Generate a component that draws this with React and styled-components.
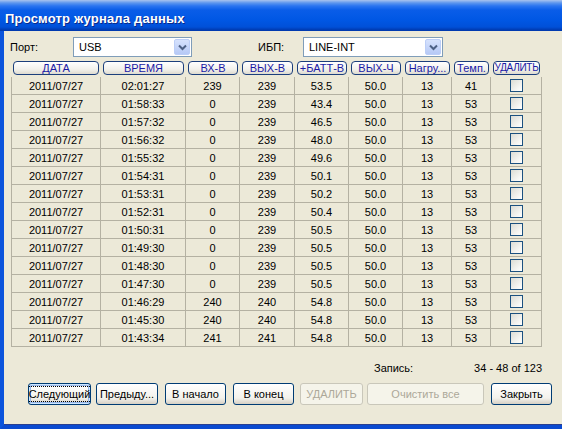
import React from 'react';
import styled, { createGlobalStyle } from 'styled-components';

const GlobalStyle = createGlobalStyle`
  body {
    margin: 0;
    font-family: "Liberation Sans", Arial, sans-serif;
  }
  #root {
    width: 562px;
    height: 429px;
    overflow: hidden;
  }
`

//whole dialog
const Window = styled.div`
  width: 562px;
  height: 429px;
  display: flex;
  flex-direction: column;
  overflow: hidden;
`

//blue xp caption
const TitleBar = styled.div`
  height: 31px;
  flex: none;
  display: flex;
  align-items: center;
  padding-left: 5px;
  padding-top: 5px;
  box-sizing: border-box;
  background: linear-gradient(
    to bottom,
    #a9c3ee 0px,
    #5b95ee 3px,
    #2a74f0 6px,
    #0a5de8 10px,
    #0057e4 20px,
    #0050d8 27px,
    #003ab0 30px,
    #003ab0 31px
  );
`

const Title = styled.span`
  color: #fff;
  font-weight: bold;
  font-size: 13px;
  text-shadow: 1px 1px 0 #0a2a8a;
  letter-spacing: 0.2px;
`

//beige client area with xp frame on left and bottom
const Content = styled.div`
  flex: 1;
  background: #ece9d8;
  border-left: 4px solid #0b54dc;
  border-bottom: 4px solid #0a4ad0;
  box-shadow: inset 0 -1px 0 #2a3f8f;
  padding: 6px 0 0 7px;
  display: flex;
  flex-direction: column;
  font-size: 11px;
  color: #000;
`

const FilterRow = styled.div`
  display: flex;
  align-items: center;
  height: 20px;
`

const Label = styled.span`
  width: ${p => p.$w}px;
  margin-left: ${p => p.$ml || 0}px;
  font-size: 11px;
`

const Combo = styled.div`
  width: ${p => p.$w}px;
  height: 20px;
  box-sizing: border-box;
  border: 1px solid #7f9db9;
  background: #fff;
  display: flex;
  align-items: center;
  padding: 1px;
`

const ComboText = styled.span`
  flex: 1;
  padding-left: 4px;
  font-size: 11px;
`

const ComboButton = styled.div`
  width: 16px;
  height: 16px;
  box-sizing: border-box;
  border: 1px solid #bccef7;
  border-radius: 2px;
  background: linear-gradient(to bottom, #d6e2fd, #b6c9f6);
  display: flex;
  align-items: center;
  justify-content: center;
`

//table
const Grid = styled.div`
  margin-top: 3px;
  width: 531px;
  display: grid;
  grid-template-columns: 90px 85px 54px 55px 54px 54px 49px 39px 51px;
`

const HeadCell = styled.div`
  height: 17px;
  padding: 1px 2px 2px 2px;
  box-sizing: border-box;
`

const HeadButton = styled.div`
  height: 14px;
  box-sizing: border-box;
  border: 1px solid #1c3f7c;
  border-radius: 4px;
  background: linear-gradient(to bottom, #ffffff, #f2f1ec 60%, #dedbd0);
  color: #1a1aa6;
  font-size: ${p => (p.$tight ? 10 : 11)}px;
  letter-spacing: ${p => (p.$tight ? -0.3 : 0)}px;
  line-height: 12px;
  text-align: center;
  white-space: nowrap;
  overflow: hidden;
`

const Cell = styled.div`
  height: 18px;
  box-sizing: border-box;
  border-bottom: 1px solid #b4b1a2;
  border-right: 1px solid #b4b1a2;
  border-left: ${p => (p.$first ? '1px solid #b4b1a2' : 'none')};
  display: flex;
  align-items: center;
  justify-content: center;
  font-size: 11px;
  background: #ece9d8;
`

const Check = styled.div`
  width: 13px;
  height: 13px;
  box-sizing: border-box;
  border: 1px solid #1c5180;
  background: linear-gradient(135deg, #dcdcd4, #f6f6f3 70%, #ffffff);
`

//record counter
const StatRow = styled.div`
  width: 531px;
  margin-top: 15px;
  display: flex;
  justify-content: flex-end;
`

const Stat = styled.div`
  width: 168px;
  display: flex;
  justify-content: space-between;
  font-size: 11px;
`

const ButtonRow = styled.div`
  margin-top: 9px;
  display: flex;
`

const Button = styled.div`
  width: ${p => p.$w}px;
  margin-left: ${p => p.$ml}px;
  height: 22px;
  box-sizing: border-box;
  border: 1px solid ${p => (p.$disabled ? '#c9c7ba' : '#003c74')};
  border-radius: 3px;
  background: ${p =>
    p.$disabled
      ? '#f5f4ea'
      : 'linear-gradient(to bottom, #ffffff, #f3f2ec 70%, #d6d0c5)'};
  color: ${p => (p.$disabled ? '#aca899' : '#000')};
  box-shadow: ${p =>
    p.$focus ? 'inset 0 0 0 1px #cee7ff, inset 0 0 0 2px #98b8ea' : 'none'};
  font-size: 11px;
  display: flex;
  align-items: center;
  justify-content: center;
  white-space: nowrap;
  overflow: hidden;
`

const FocusText = styled.span`
  outline: 1px dotted #000;
  outline-offset: 1px;
`

const headers = ['ДАТА', 'ВРЕМЯ', 'ВХ-В', 'ВЫХ-В', '+БАТТ-В', 'ВЫХ-Ч', 'Нагру...', 'Темп.', 'УДАЛИТЬ'];

const rows = [
  ['02:01:27', '239', '239', '53.5', '41'],
  ['01:58:33', '0', '239', '43.4', '53'],
  ['01:57:32', '0', '239', '46.5', '53'],
  ['01:56:32', '0', '239', '48.0', '53'],
  ['01:55:32', '0', '239', '49.6', '53'],
  ['01:54:31', '0', '239', '50.1', '53'],
  ['01:53:31', '0', '239', '50.2', '53'],
  ['01:52:31', '0', '239', '50.4', '53'],
  ['01:50:31', '0', '239', '50.5', '53'],
  ['01:49:30', '0', '239', '50.5', '53'],
  ['01:48:30', '0', '239', '50.5', '53'],
  ['01:47:30', '0', '239', '50.5', '53'],
  ['01:46:29', '240', '240', '54.8', '53'],
  ['01:45:30', '240', '240', '54.8', '53'],
  ['01:43:34', '241', '241', '54.8', '53'],
];

const Chevron = () => (
  <svg width="9" height="7" viewBox="0 0 9 7">
    <path d="M1 1.5 L4.5 5 L8 1.5" fill="none" stroke="#4d6185" strokeWidth="2" />
  </svg>
);

const App = () => (
  <Window>
    <GlobalStyle />
    <TitleBar>
      <Title>Просмотр журнала данных</Title>
    </TitleBar>
    <Content>
      <FilterRow>
        <Label $w={63} $ml={-1}>Порт:</Label>
        <Combo $w={119}>
          <ComboText>USB</ComboText>
          <ComboButton><Chevron /></ComboButton>
        </Combo>
        <Label $w={45} $ml={66}>ИБП:</Label>
        <Combo $w={140}>
          <ComboText>LINE-INT</ComboText>
          <ComboButton><Chevron /></ComboButton>
        </Combo>
      </FilterRow>

      <Grid>
        {headers.map(h => (
          <HeadCell key={h}>
            <HeadButton $tight={h === 'УДАЛИТЬ'}>{h}</HeadButton>
          </HeadCell>
        ))}
        {rows.map((r, i) => (
          <React.Fragment key={i}>
            <Cell $first>2011/07/27</Cell>
            <Cell>{r[0]}</Cell>
            <Cell>{r[1]}</Cell>
            <Cell>{r[2]}</Cell>
            <Cell>{r[3]}</Cell>
            <Cell>50.0</Cell>
            <Cell>13</Cell>
            <Cell>{r[4]}</Cell>
            <Cell><Check /></Cell>
          </React.Fragment>
        ))}
      </Grid>

      <StatRow>
        <Stat>
          <span>Запись:</span>
          <span>34 - 48 of 123</span>
        </Stat>
      </StatRow>

      <ButtonRow>
        <Button $w={63} $ml={17} $focus><FocusText>Следующий</FocusText></Button>
        <Button $w={62} $ml={5}>Предыду...</Button>
        <Button $w={61} $ml={7}>В начало</Button>
        <Button $w={61} $ml={7}>В конец</Button>
        <Button $w={63} $ml={6} $disabled>УДАЛИТЬ</Button>
        <Button $w={117} $ml={4} $disabled>Очистить все</Button>
        <Button $w={61} $ml={7}>Закрыть</Button>
      </ButtonRow>
    </Content>
  </Window>
);

export default App;
